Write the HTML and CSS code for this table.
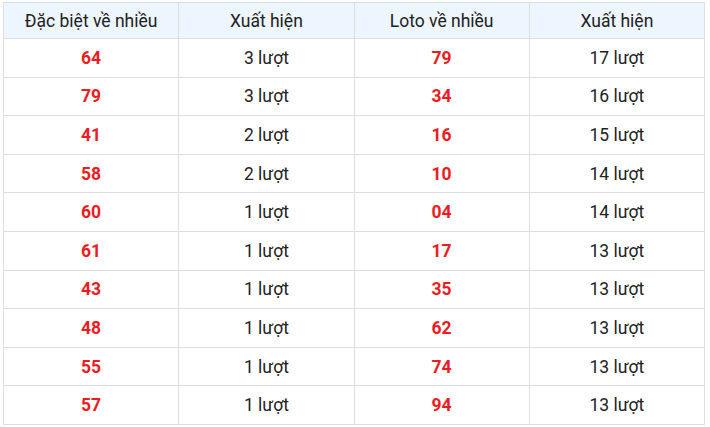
FILE: index.html
```html
<!DOCTYPE html>
<html lang="vi">
<head>
<meta charset="utf-8">
<link rel="stylesheet" href="styles.css">
</head>
<body>
<table class="stats">
<thead>
<tr><th>Đặc biệt về nhiều</th><th>Xuất hiện</th><th>Loto về nhiều</th><th>Xuất hiện</th></tr>
</thead>
<tbody>
<tr><td class="num">64</td><td>3 lượt</td><td class="num">79</td><td>17 lượt</td></tr>
<tr><td class="num">79</td><td>3 lượt</td><td class="num">34</td><td>16 lượt</td></tr>
<tr><td class="num">41</td><td>2 lượt</td><td class="num">16</td><td>15 lượt</td></tr>
<tr><td class="num">58</td><td>2 lượt</td><td class="num">10</td><td>14 lượt</td></tr>
<tr><td class="num">60</td><td>1 lượt</td><td class="num">04</td><td>14 lượt</td></tr>
<tr><td class="num">61</td><td>1 lượt</td><td class="num">17</td><td>13 lượt</td></tr>
<tr><td class="num">43</td><td>1 lượt</td><td class="num">35</td><td>13 lượt</td></tr>
<tr><td class="num">48</td><td>1 lượt</td><td class="num">62</td><td>13 lượt</td></tr>
<tr><td class="num">55</td><td>1 lượt</td><td class="num">74</td><td>13 lượt</td></tr>
<tr><td class="num">57</td><td>1 lượt</td><td class="num">94</td><td>13 lượt</td></tr>
</tbody>
</table>
</body>
</html>
```
FILE: styles.css
```css
html, body {
  margin: 0;
  background: #fff;
}
body {
  padding: 2px 5px 0 3px;
  font-family: Roboto, "Liberation Sans", sans-serif;
  font-size: 17.5px;
  color: #222;
}
.stats {
  width: 702px;
  border-collapse: collapse;
  table-layout: fixed;
}
.stats th, .stats td {
  border: 1px solid #dedede;
  text-align: center;
  padding: 0;
}
.stats th {
  background: #edf5fe;
  font-weight: 400;
  height: 35px;
}
.stats td {
  height: 37.6px;
}
.stats td.num {
  color: #ec1c24;
  font-weight: 700;
}
```
